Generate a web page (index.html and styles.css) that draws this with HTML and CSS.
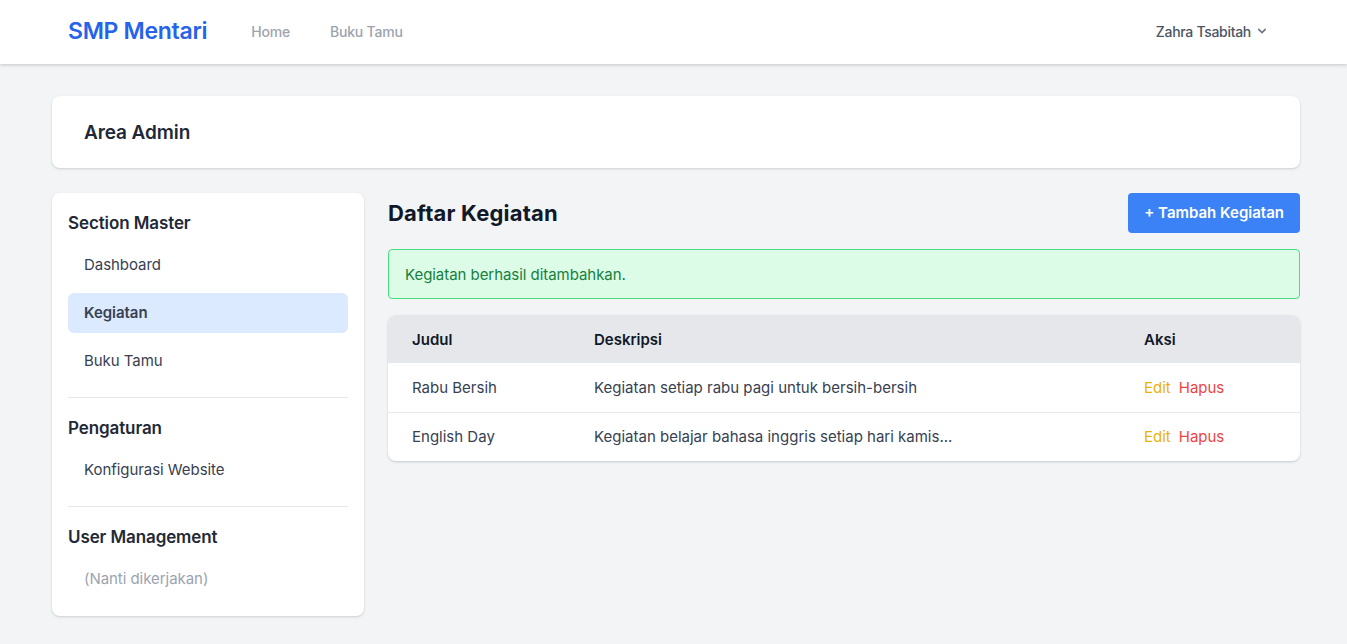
FILE: index.html
```html
<!DOCTYPE html>
<html lang="id">
<head>
<meta charset="utf-8">
<title>SMP Mentari - Admin</title>
<link rel="stylesheet" href="styles.css">
</head>
<body>
<nav class="topnav">
  <div class="nav-inner">
    <div class="nav-left">
      <a class="brand">SMP Mentari</a>
      <a class="nav-link">Home</a>
      <a class="nav-link">Buku Tamu</a>
    </div>
    <div class="user">
      <span>Zahra Tsabitah</span>
      <svg class="chev" width="16" height="16" viewBox="0 0 20 20" fill="currentColor"><path fill-rule="evenodd" d="M5.293 7.293a1 1 0 011.414 0L10 10.586l3.293-3.293a1 1 0 111.414 1.414l-4 4a1 1 0 01-1.414 0l-4-4a1 1 0 010-1.414z" clip-rule="evenodd"/></svg>
    </div>
  </div>
</nav>

<main class="page">
  <header class="page-header card">
    <h2>Area Admin</h2>
  </header>

  <div class="layout">
    <aside class="sidebar card">
      <h3 class="side-title">Section Master</h3>
      <ul class="side-menu">
        <li><a>Dashboard</a></li>
        <li><a class="active">Kegiatan</a></li>
        <li><a>Buku Tamu</a></li>
      </ul>
      <hr>
      <h3 class="side-title">Pengaturan</h3>
      <ul class="side-menu">
        <li><a>Konfigurasi Website</a></li>
      </ul>
      <hr>
      <h3 class="side-title">User Management</h3>
      <ul class="side-menu">
        <li><span class="muted">(Nanti dikerjakan)</span></li>
      </ul>
    </aside>

    <section class="content">
      <div class="content-head">
        <h1>Daftar Kegiatan</h1>
        <a class="btn-primary">+ Tambah Kegiatan</a>
      </div>
      <div class="alert-success">Kegiatan berhasil ditambahkan.</div>
      <div class="table-card">
        <table>
          <thead>
            <tr><th class="c-judul">Judul</th><th>Deskripsi</th><th class="c-aksi">Aksi</th></tr>
          </thead>
          <tbody>
            <tr><td>Rabu Bersih</td><td>Kegiatan setiap rabu pagi untuk bersih-bersih</td><td><a class="edit">Edit</a><a class="hapus">Hapus</a></td></tr>
            <tr><td>English Day</td><td>Kegiatan belajar bahasa inggris setiap hari kamis...</td><td><a class="edit">Edit</a><a class="hapus">Hapus</a></td></tr>
          </tbody>
        </table>
      </div>
    </section>
  </div>
</main>
</body>
</html>
```

FILE: styles.css
```css
* { box-sizing: border-box; }
html, body { margin: 0; padding: 0; }
body {
  font-family: Inter, "Noto Sans", sans-serif;
  background: #f3f4f6;
  color: #111827;
  min-height: 644px;
}
a { text-decoration: none; cursor: pointer; }
h1, h2, h3 { margin: 0; }

.topnav {
  background: #fff;
  height: 64px;
  box-shadow: 0 1px 3px rgba(0,0,0,0.12), 0 2px 4px rgba(0,0,0,0.06);
  position: relative;
}
.nav-inner {
  height: 64px;
  margin-left: 68px;
  width: 1202px;
  padding-bottom: 2px;
  display: flex;
  align-items: center;
  justify-content: space-between;
}
.nav-left { display: flex; align-items: center; }
.brand {
  color: #2563eb;
  font-size: 23px;
  font-weight: 600;
  letter-spacing: -0.3px;
  margin-right: 44px;
}
.nav-link {
  color: #9ca3af;
  font-size: 14px;
  font-weight: 500;
  margin-right: 40px;
  letter-spacing: -0.2px;
}
.user {
  display: flex;
  align-items: center;
  gap: 3px;
  color: #4b5563;
  font-size: 14px;
  font-weight: 500;
  letter-spacing: -0.3px;
}
.chev { color: #6b7280; }

.page {
  width: 1248px;
  margin-left: 52px;
  padding-top: 32px;
}
.card {
  background: #fff;
  border-radius: 8px;
  box-shadow: 0 1px 3px rgba(0,0,0,0.1), 0 1px 2px rgba(0,0,0,0.06);
}
.page-header {
  height: 72px;
  display: flex;
  align-items: center;
  padding: 0 32px;
}
.page-header h2 {
  font-size: 19px;
  font-weight: 600;
  color: #1f2937;
  letter-spacing: -0.1px;
}

.layout {
  display: flex;
  gap: 24px;
  margin-top: 25px;
  align-items: flex-start;
}
.sidebar {
  width: 312px;
  flex: none;
  padding: 18px 16px 17px;
}
.side-title {
  font-size: 17px;
  font-weight: 600;
  color: #1f2937;
  line-height: 24px;
  margin-bottom: 10px;
  letter-spacing: -0.1px;
}
.side-menu {
  list-style: none;
  margin: 0;
  padding: 0;
  display: flex;
  flex-direction: column;
  gap: 8px;
}
.side-menu a, .side-menu span {
  display: block;
  height: 40px;
  line-height: 40px;
  padding: 0 16px;
  border-radius: 6px;
  font-size: 15px;
  color: #374151;
  letter-spacing: -0.05px;
}
.side-menu a.active {
  background: #dbeafe;
  font-weight: 600;
}
.side-menu .muted { color: #9ca3af; }
.sidebar hr {
  border: 0;
  border-top: 1px solid #e5e7eb;
  margin: 16px 0 18px;
}

.content { flex: 1; }
.content-head {
  display: flex;
  align-items: center;
  justify-content: space-between;
  height: 40px;
  margin-bottom: 16px;
}
.content-head h1 {
  font-size: 22px;
  font-weight: 700;
  color: #111827;
  letter-spacing: 0.2px;
}
.btn-primary {
  background: #3b82f6;
  color: #fff;
  font-size: 15px;
  font-weight: 600;
  height: 40px;
  line-height: 40px;
  padding: 0 16px;
  border-radius: 4px;
  letter-spacing: 0;
}
.alert-success {
  background: #dcfce7;
  border: 1px solid #4ade80;
  color: #15803d;
  border-radius: 4px;
  height: 50px;
  display: flex;
  align-items: center;
  padding: 0 16px;
  font-size: 15px;
  letter-spacing: -0.05px;
  margin-bottom: 16px;
}
.table-card {
  background: #fff;
  border-radius: 8px;
  overflow: hidden;
  box-shadow: 0 1px 3px rgba(0,0,0,0.12), 0 1px 2px rgba(0,0,0,0.06);
}
table { width: 100%; border-collapse: collapse; }
th, td {
  text-align: left;
  padding: 0 24px;
  height: 48px;
  font-size: 15px;
  letter-spacing: 0;
}
th { background: #e5e7eb; font-weight: 600; color: #111827; }
td { color: #374151; height: 49px; }
tbody tr + tr td { border-top: 1px solid #e5e7eb; }
.c-judul { width: 182px; }
.c-aksi { width: 180px; }
.edit { color: #eab308; margin-right: 8px; }
.hapus { color: #ef4444; }
```
